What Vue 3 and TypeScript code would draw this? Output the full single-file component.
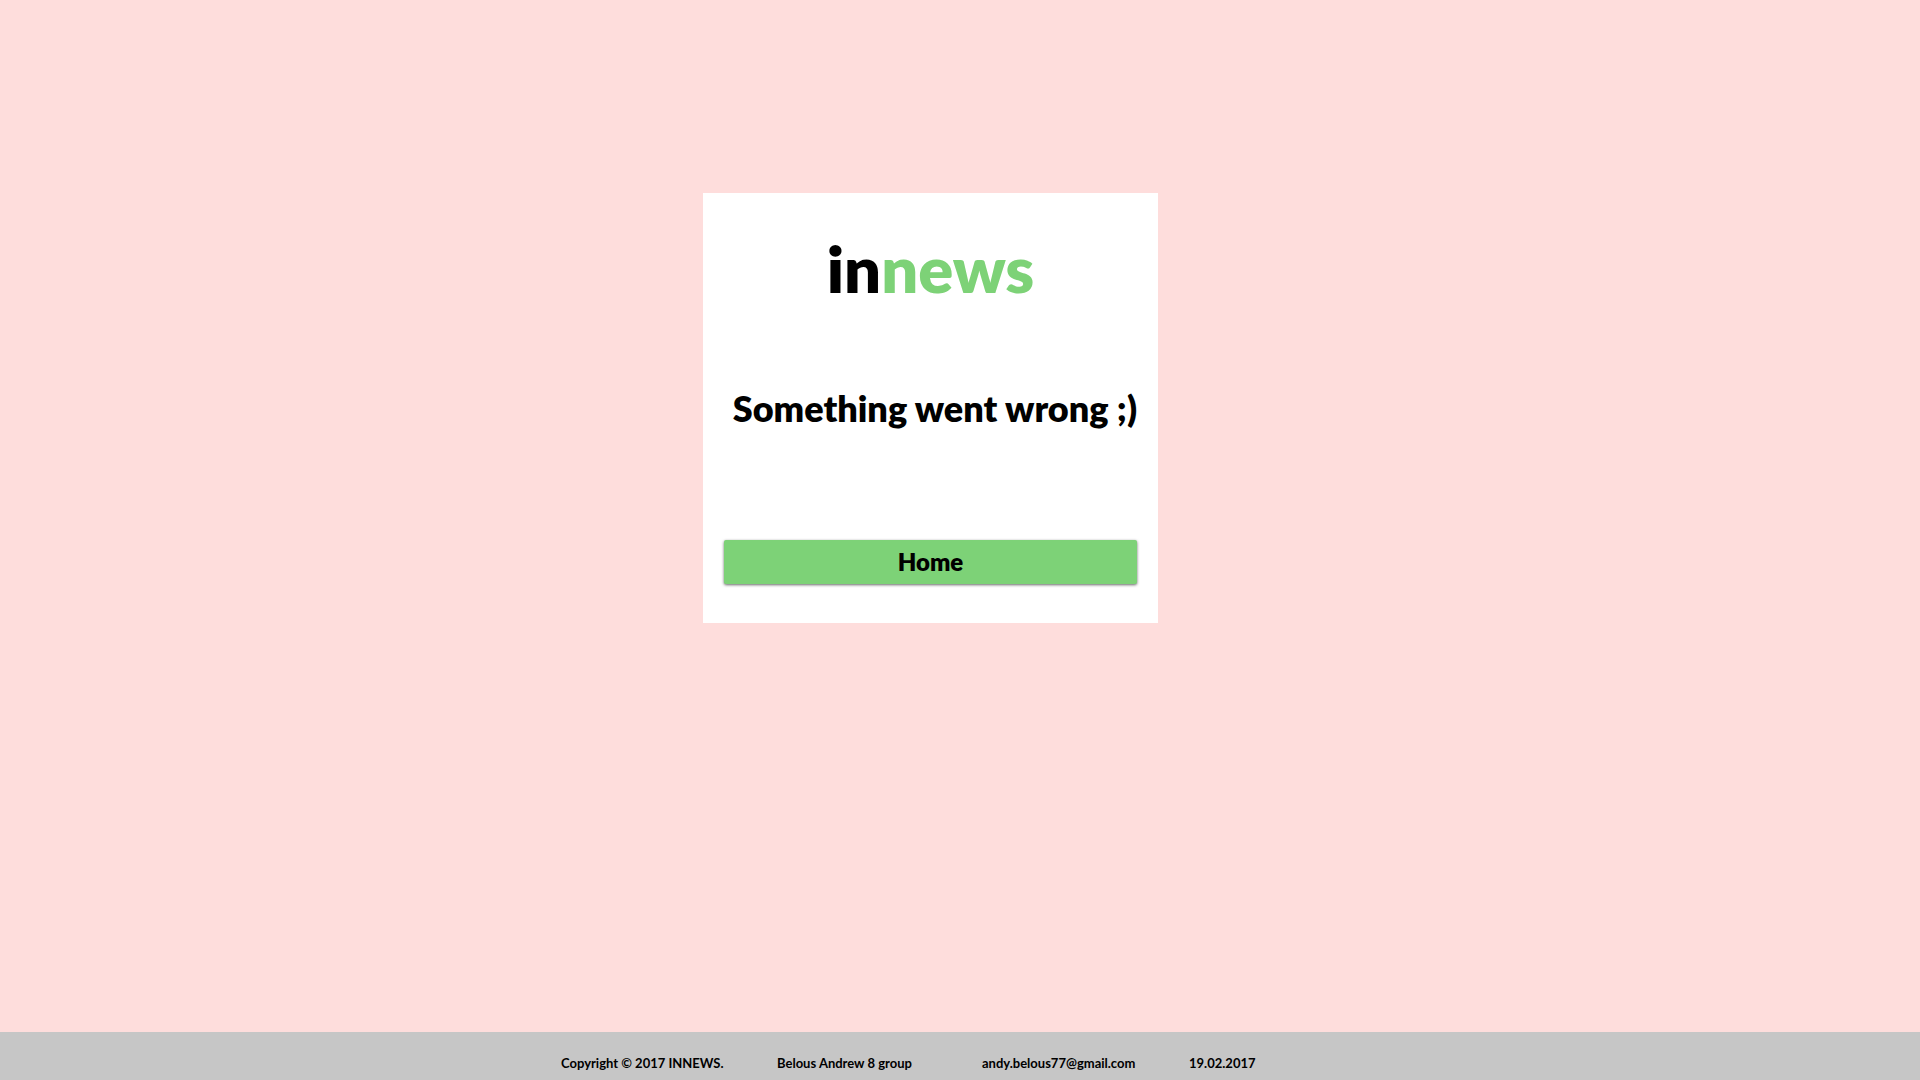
<script setup lang="ts">
const details: string[] = ['Copyright © 2017 INNEWS.', 'Belous Andrew 8 group', 'andy.belous77@gmail.com', '19.02.2017']
</script>

<template>
  <div class="page">
    <main class="main">
      <section class="card">
        <div class="logo">in<span class="accent">news</span></div>
        <h1 class="message">Something went wrong ;)</h1>
        <button type="button" class="home">Home</button>
      </section>
    </main>
    <footer class="footer">
      <span v-for="detail in details" :key="detail">{{ detail }}</span>
    </footer>
  </div>
</template>

<style>
body {
  margin: 0;
}
</style>

<style scoped>
.page {
  display: flex;
  flex-direction: column;
  min-height: 100vh;
  background: #fedddc;
  color: #000;
  font-family: Lato, sans-serif;
}

.main {
  flex: 1;
  display: flex;
  justify-content: center;
  align-items: flex-start;
  padding: 193px 59px 40px 0;
}

.card {
  box-sizing: border-box;
  width: 455px;
  padding: 37px 21px 39px;
  background: #fff;
}

.logo {
  font-size: 65px;
  line-height: 76px;
  font-weight: 800;
  text-align: center;
}

.accent {
  color: #7dd277;
}

.message {
  margin: 78px 0 108px;
  font-size: 36px;
  line-height: 48px;
  font-weight: 800;
  text-align: right;
  white-space: nowrap;
}

.home {
  display: block;
  width: 100%;
  height: 44px;
  padding: 0;
  border: 0;
  border-radius: 2px;
  background: #7dd277;
  box-shadow: 0 1px 3px rgba(0, 0, 0, 0.6);
  color: #000;
  font: 800 24px/44px Lato, sans-serif;
}

.footer {
  display: grid;
  grid-template-columns: 216px 205px 207px auto;
  justify-content: start;
  align-items: center;
  box-sizing: border-box;
  height: 48px;
  padding: 14px 0 0 561px;
  background: #c6c6c6;
  font-size: 13px;
  line-height: 16px;
  font-weight: 700;
}
</style>
